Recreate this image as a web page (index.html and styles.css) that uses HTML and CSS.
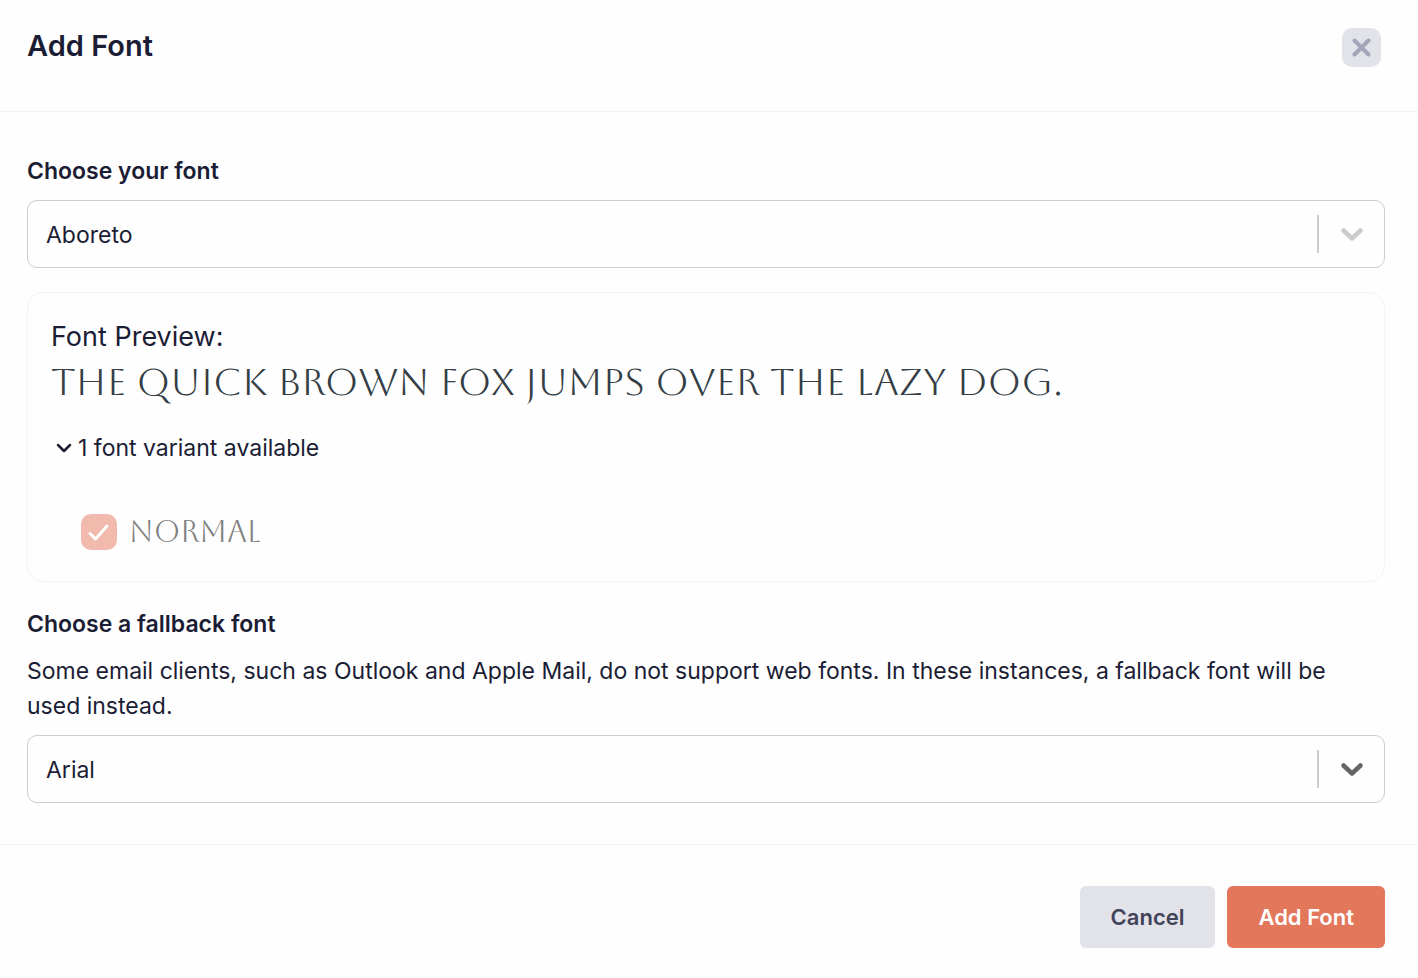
FILE: index.html
```html
<!DOCTYPE html>
<html lang="en">
<head>
    <meta charset="UTF-8">
    <meta name="viewport" content="width=device-width, initial-scale=1">
    <title>Add Font</title>
    <link rel="stylesheet" href="styles.css">
</head>
<body>
<form class="modal">
    <header class="modal-header">
        <h1 class="title">Add Font</h1>
        <button class="close" type="button" aria-label="Close">
            <svg width="19" height="19" viewBox="0 0 19 19">
                <path d="M2.500 2.500l14 14M16.500 2.500l-14 14"/>
            </svg>
        </button>
    </header>

    <main class="modal-body">
        <label class="label" for="font">Choose your font</label>
        <div class="select">
            <select id="font">
                <option>Aboreto</option>
            </select>
            <span class="indicator light">
                <svg width="24" height="16" viewBox="0 0 24 16">
                    <path d="M3.500 4.500l8.500 8 8.500-8"/>
                </svg>
            </span>
        </div>

        <section class="preview">
            <h2 class="preview-title">Font Preview:</h2>
            <p class="sample">The quick brown fox jumps over the lazy dog.</p>
            <button class="toggle" type="button" aria-expanded="true">
                <svg width="16" height="16" viewBox="0 0 16 16">
                    <path d="M2 5l6 6 6-6"/>
                </svg>
                1 font variant available
            </button>
            <div class="variant">
                <input id="normal" type="checkbox" checked disabled>
                <svg class="tick" width="36" height="36" viewBox="0 0 36 36">
                    <path d="M9 19.500l5.500 5.500L26 12"/>
                </svg>
                <label for="normal">Normal</label>
            </div>
        </section>

        <label class="label" for="fallback">Choose a fallback font</label>
        <p class="help">Some email clients, such as Outlook and Apple Mail, do not support web fonts. In these instances, a fallback font will be used instead.</p>
        <div class="select">
            <select id="fallback">
                <option>Arial</option>
            </select>
            <span class="indicator">
                <svg width="24" height="16" viewBox="0 0 24 16">
                    <path d="M3.500 4.500l8.500 8 8.500-8"/>
                </svg>
            </span>
        </div>
    </main>

    <footer class="modal-footer">
        <button class="btn" type="button">Cancel</button>
        <button class="btn primary" type="submit">Add Font</button>
    </footer>
</form>
</body>
</html>
```
FILE: styles.css
```css
* {
    box-sizing: border-box;
}

body {
    margin: 0;
    background-color: #fefefe;
    font-family: Inter, "Liberation Sans", sans-serif;
    font-size: 23px;
    line-height: 35px;
    color: #1b1d35;
}

h1, h2, p {
    margin: 0;
}

button, select {
    font-family: inherit;
    font-size: inherit;
    color: inherit;
}

svg {
    fill: none;
    stroke: currentColor;
    stroke-linecap: round;
    stroke-linejoin: round;
}

.modal-header {
    display: flex;
    justify-content: space-between;
    align-items: flex-start;
    padding: 28px 37px 44px 27px;
    border-bottom: 1px solid #f2f2f3;
}

.title {
    font-size: 29px;
    line-height: 36px;
    font-weight: 600;
}

.close {
    display: flex;
    align-items: center;
    justify-content: center;
    width: 39px;
    height: 39px;
    padding: 0;
    border: 0;
    border-radius: 10px;
    background-color: #e2e3e9;
    color: #a3a5b9;
}

.close svg {
    stroke-width: 4;
}

.modal-body {
    padding: 41px 33px 41px 27px;
}

.label {
    display: block;
    line-height: 36px;
    font-weight: 600;
}

/* select */
.select {
    display: grid;
    align-items: center;
    margin-top: 11px;
}

.select select {
    grid-area: 1 / 1;
    width: 100%;
    height: 68px;
    padding: 2px 84px 0 18px;
    border: 1px solid #cccccc;
    border-radius: 10px;
    background-color: #fefefe;
    appearance: none;
}

.indicator {
    grid-area: 1 / 1;
    justify-self: end;
    display: flex;
    align-items: center;
    justify-content: center;
    width: 68px;
    height: 38px;
    border-left: 2px solid #cccccc;
    color: #666666;
    pointer-events: none;
}

.indicator svg {
    stroke-width: 4.5;
}

.light {
    color: #cccccc;
}

/* preview */
.preview {
    margin: 24px 0;
    padding: 26px 24px 31px 23px;
    border: 1px solid #f4f4f5;
    border-radius: 16px;
}

.preview-title {
    font-size: 27px;
    line-height: 36px;
    font-weight: 400;
}

.sample {
    font-family: Aboreto, Lato, sans-serif;
    font-size: 38px;
    line-height: 54px;
    font-weight: 400;
    text-transform: uppercase;
    color: #353e46;
}

.toggle {
    display: flex;
    align-items: center;
    gap: 6px;
    margin-top: 21px;
    padding: 0 5px;
    border: 0;
    background: none;
    line-height: 36px;
}

.toggle svg {
    stroke-width: 2.5;
}

.variant {
    display: grid;
    grid-template-columns: 36px auto;
    justify-content: start;
    align-items: center;
    column-gap: 12px;
    margin: 48px 0 0 30px;
}

.variant input {
    grid-area: 1 / 1;
    width: 36px;
    height: 36px;
    margin: 0;
    border-radius: 10px;
    background-color: #f1baac;
    appearance: none;
}

.variant .tick {
    grid-area: 1 / 1;
    color: #ffffff;
    stroke-width: 3;
    pointer-events: none;
}

.variant label {
    font-family: Aboreto, Lato, sans-serif;
    font-size: 30px;
    line-height: 36px;
    font-weight: 400;
    text-transform: uppercase;
    color: #808080;
}

.help {
    margin-top: 12px;
}

/* footer */
.modal-footer {
    display: flex;
    justify-content: flex-end;
    gap: 12px;
    padding: 41px 33px 30px;
    border-top: 1px solid #f2f2f3;
}

.btn {
    height: 62px;
    padding: 0 31px;
    border: 0;
    border-radius: 6px;
    background-color: #e2e3e9;
    font-size: 22px;
    font-weight: 600;
    color: #42435a;
}

.primary {
    background-color: #e2775c;
    color: #ffffff;
}
```
